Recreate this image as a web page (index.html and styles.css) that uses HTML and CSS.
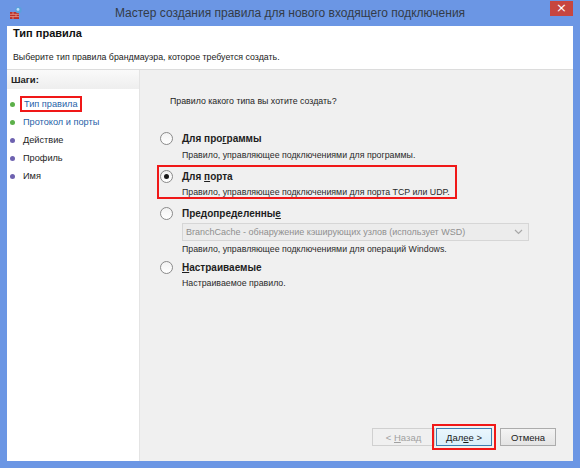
FILE: index.html
```html
<!DOCTYPE html>
<html lang="ru">
<head>
<meta charset="utf-8">
<link rel="stylesheet" href="styles.css">
</head>
<body>
<div class="window">
  <div class="titlebar">
    <div class="app-icon">
      <svg width="14" height="14" viewBox="0 0 14 14">
        <rect x="1" y="6" width="9" height="7" fill="#b8302a"/>
        <path d="M1 8.3h9M1 10.6h9M4 6v2.3M7 8.3v2.3M4 10.6V13" stroke="#e8a090" stroke-width="0.8"/>
        <circle cx="9.5" cy="4" r="3.2" fill="#5aa0dc"/>
        <circle cx="9" cy="3.4" r="1.4" fill="#bfe0f8"/>
      </svg>
    </div>
    <div class="title">Мастер создания правила для нового входящего подключения</div>
    <div class="close">×</div>
  </div>
  <div class="client">
    <div class="header">
      <div class="h-title">Тип правила</div>
      <div class="h-sub">Выберите тип правила брандмауэра, которое требуется создать.</div>
    </div>
    <div class="main">
      <div class="steps">
        <div class="steps-head">Шаги:</div>
        <ul class="step-list">
          <li class="step done"><span class="dot green"></span><span class="step-label marked">Тип правила</span></li>
          <li class="step done"><span class="dot green"></span><span class="step-label">Протокол и порты</span></li>
          <li class="step"><span class="dot purple"></span><span class="step-label">Действие</span></li>
          <li class="step"><span class="dot purple"></span><span class="step-label">Профиль</span></li>
          <li class="step"><span class="dot purple"></span><span class="step-label">Имя</span></li>
        </ul>
      </div>
      <div class="content">
        <div class="question">Правило какого типа вы хотите создать?</div>
        <div class="options">
          <div class="option">
            <div class="opt-row"><span class="radio"></span><span class="opt-label">Для про<u>г</u>раммы</span></div>
            <div class="opt-desc">Правило, управляющее подключениями для программы.</div>
          </div>
          <div class="option selected">
            <div class="opt-row"><span class="radio checked"></span><span class="opt-label">Для <u>п</u>орта</span></div>
            <div class="opt-desc">Правило, управляющее подключениями для порта TCP или UDP.</div>
          </div>
          <div class="option predefined">
            <div class="opt-row"><span class="radio"></span><span class="opt-label">Предопределенны<u>е</u></span></div>
            <div class="select"><span>BranchCache - обнаружение кэширующих узлов (использует WSD)</span>
              <svg width="9" height="6" viewBox="0 0 9 6"><path d="M1 1l3.5 3.5L8 1" fill="none" stroke="#a8a8a8" stroke-width="1.2"/></svg>
            </div>
            <div class="opt-desc">Правило, управляющее подключениями для операций Windows.</div>
          </div>
          <div class="option">
            <div class="opt-row"><span class="radio"></span><span class="opt-label"><u>Н</u>астраиваемые</span></div>
            <div class="opt-desc">Настраиваемое правило.</div>
          </div>
        </div>
        <div class="buttons">
          <button class="btn disabled">&lt; <u>Н</u>азад</button>
          <button class="btn primary">Дал<u>е</u>е &gt;</button>
          <button class="btn">Отмена</button>
        </div>
      </div>
    </div>
  </div>
</div>
</body>
</html>
```

FILE: styles.css
```css
html, body {
  margin: 0;
  padding: 0;
}
body {
  width: 580px;
  height: 468px;
  overflow: hidden;
  font-family: "Liberation Sans", Arial, sans-serif;
  font-size: 9.2px;
  color: #1e1e1e;
}
.window {
  width: 580px;
  height: 468px;
  background: #6b96e4;
  display: flex;
  flex-direction: column;
  box-sizing: border-box;
}
.titlebar {
  height: 26px;
  display: grid;
  grid-template-columns: 40px 1fr 40px;
  align-items: start;
}
.app-icon {
  padding: 6px 0 0 9px;
}
.title {
  text-align: center;
  font-size: 12px;
  color: #333b48;
  padding-top: 6px;
}
.close {
  justify-self: end;
  margin: 1px 7px 0 0;
  width: 23px;
  height: 15px;
  background: #c7463f;
  color: #fff;
  font-size: 13px;
  line-height: 14px;
  text-align: center;
  font-family: "DejaVu Sans", sans-serif;
}
.client {
  flex: 1;
  margin: 0 7px 7px 7px;
  background: #f0f0f0;
  display: flex;
  flex-direction: column;
}
.header {
  height: 43px;
  background: #fff;
  border-bottom: 1px solid #dcdcdc;
  padding: 0 0 0 6px;
}
.h-title {
  font-weight: bold;
  font-size: 11px;
  line-height: 12px;
  padding-top: 1px;
  color: #111;
}
.h-sub {
  font-size: 8.8px;
  line-height: 12px;
  margin-top: 12px;
  color: #222;
}
.main {
  flex: 1;
  display: flex;
}
.steps {
  width: 132px;
  background: #fff;
  border-right: 1px solid #e4e4e4;
}
.steps-head {
  height: 19px;
  line-height: 20px;
  padding-left: 4px;
  font-weight: bold;
  font-size: 9.5px;
  background: linear-gradient(#fafafa, #eeeeee);
  color: #222;
}
.step-list {
  list-style: none;
  margin: 0;
  padding: 6px 0 0 3px;
}
.step {
  height: 18px;
  display: flex;
  align-items: center;
}
.dot {
  width: 5px;
  height: 5px;
  border-radius: 50%;
  margin-right: 8px;
}
.dot.green { background: #5cb04a; }
.dot.purple { background: #6e62b0; }
.step.done .step-label { color: #1f5fa8; }
.marked {
  outline: 2px solid #f01818;
  outline-offset: 1px;
  padding: 0 1px;
}
.content {
  flex: 1;
  display: flex;
  flex-direction: column;
  padding: 25px 17px 15px 18px;
}
.question {
  padding-left: 12px;
  line-height: 12px;
  font-size: 8.8px;
}
.options {
  padding-top: 21px;
  flex: 1;
}
.option {
  margin-bottom: 5px;
  width: 296px;
  padding: 2px 0 0 2px;
}
.option.predefined {
  margin-bottom: 2px;
}
.option.selected {
  outline: 2px solid #f01818;
  outline-offset: -1px;
}
.opt-row {
  display: flex;
  align-items: center;
  height: 17px;
}
.radio {
  width: 11px;
  height: 11px;
  border: 1px solid #8a8a8a;
  border-radius: 50%;
  background: linear-gradient(#f2f2f2, #ffffff);
  margin-right: 9px;
  position: relative;
  box-sizing: content-box;
}
.radio.checked::after {
  content: "";
  position: absolute;
  left: 3px;
  top: 3px;
  width: 5px;
  height: 5px;
  border-radius: 50%;
  background: #1a1a1a;
}
.opt-label {
  font-weight: bold;
  font-size: 10px;
}
.opt-label u, .btn u {
  text-decoration: underline;
}
.opt-desc {
  padding-left: 22px;
  font-size: 8.8px;
  line-height: 11px;
  color: #2a2a2a;
  margin-top: 2.5px;
}
.select {
  margin: 1px 0 1px 22px;
  width: 347px;
  height: 18px;
  border: 1px solid #d6d6d6;
  background: #ececec;
  display: flex;
  align-items: center;
  justify-content: space-between;
  padding: 0 5px 0 3px;
  color: #8f8f8f;
  font-size: 9px;
  box-sizing: border-box;
}
.buttons {
  display: flex;
  justify-content: flex-end;
  gap: 8px;
}
.btn {
  font-family: "Liberation Sans", Arial, sans-serif;
  font-size: 9.5px;
  height: 18px;
  padding: 0;
  width: 56px;
  border: 1px solid #acacac;
  background: linear-gradient(#f4f4f4, #e4e4e4);
  color: #1a1a1a;
}
.btn.disabled {
  width: 63px;
  color: #a0a0a0;
  border-color: #d0d0d0;
  background: #f0f0f0;
  margin-right: -7px;
}
.btn.primary {
  border-color: #3c7fb1;
  background: linear-gradient(#eaf6fd, #d9eefa);
  outline: 2px solid #f01818;
  outline-offset: 2px;
}
```
